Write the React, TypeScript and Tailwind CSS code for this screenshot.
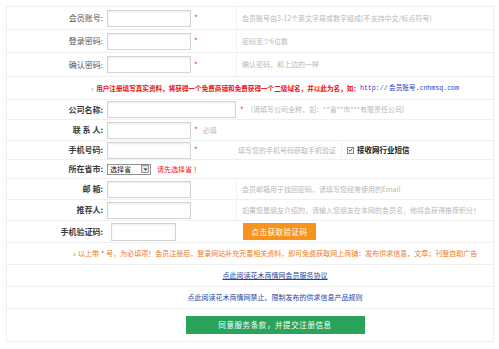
import React from "react";

const cn = "font-['Noto_Sans_CJK_SC','Noto_Sans',sans-serif]";

function Field({ w = "w-[84px]", className = "" }: { w?: string; className?: string }) {
  return (
    <input
      readOnly
      className={`${w} h-[17px] border border-[#d4d4d4] bg-white shadow-[inset_0_1px_2px_rgba(0,0,0,0.08)] outline-none ${className}`}
    />
  );
}

function Star() {
  return <span className="text-[#e4393c] text-[8px] leading-none">*</span>;
}

function Label({ text, strong = false }: { text: string; strong?: boolean }) {
  return (
    <div
      className={`w-[98px] shrink-0 pr-[2px] text-right text-[8px] leading-none ${
        strong ? "font-semibold text-[#3a3a3a]" : "text-[#555]"
      }`}
    >
      {text}
    </div>
  );
}

function Hint({ children, className = "" }: { children: React.ReactNode; className?: string }) {
  return <div className={`text-[7px] leading-none text-[#b8b8b8] whitespace-nowrap ${className}`}>{children}</div>;
}

export default function App() {
  return (
    <div className={`min-h-screen bg-white pt-[6px] px-[6px] ${cn}`}>
      <div className="w-[488px] border border-[#eeeeee]">
        {/* 会员账号 */}
        <div className="h-[23px] flex items-center border-b border-[#efefef]">
          <Label text="会员账号:" />
          <div className="w-[131px] h-full flex items-center pl-[2px] gap-[3px]">
            <Field />
            <Star />
          </div>
          <div className="h-full flex items-center pl-[5px] border-l border-[#f2f2f2]">
            <Hint>会员账号由3-12个英文字母或数字组成(不支持中文/标点符号)</Hint>
          </div>
        </div>

        {/* 登录密码 */}
        <div className="h-[23px] flex items-center border-b border-[#efefef]">
          <Label text="登录密码:" />
          <div className="w-[131px] h-full flex items-center pl-[2px] gap-[3px]">
            <Field />
            <Star />
          </div>
          <div className="h-full flex items-center pl-[5px] border-l border-[#f2f2f2]">
            <Hint>密码至少6位数</Hint>
          </div>
        </div>

        {/* 确认密码 */}
        <div className="h-[24px] flex items-center border-b border-[#efefef]">
          <Label text="确认密码:" />
          <div className="w-[131px] h-full flex items-center pl-[2px] gap-[3px]">
            <Field />
            <Star />
          </div>
          <div className="h-full flex items-center pl-[5px] border-l border-[#f2f2f2]">
            <Hint>确认密码，和上边的一样</Hint>
          </div>
        </div>

        {/* notice */}
        <div className="h-[23px] flex items-center pl-[84px] border-b border-[#efefef] text-[6.6px] leading-none whitespace-nowrap">
          <span className="text-[#f08a24] mr-[2px]">»</span>
          <span className="text-[#ee1111] font-semibold">
            用户注册填写真实资料，将获得一个免费商铺和免费获得一个二级域名，并以此为名，如：
          </span>
          <span className="text-[#2d3bc4]">
            <span className="font-['Liberation_Mono',monospace]">http://</span> 会员账号
            <span className="font-['Liberation_Mono',monospace]">.cnhmsq.com</span>
          </span>
        </div>

        {/* 公司名称 */}
        <div className="h-[20px] flex items-center border-b border-[#efefef]">
          <Label text="公司名称:" strong />
          <div className="h-full flex items-center pl-[2px] gap-[4px]">
            <Field w="w-[129px]" />
            <Star />
          </div>
          <Hint className="ml-[7px]">(请填写公司全称，如：**省**市***有限责任公司)</Hint>
        </div>

        {/* 联系人 */}
        <div className="h-[21px] flex items-center border-b border-[#efefef]">
          <Label text="联 系 人:" strong />
          <div className="h-full flex items-center pl-[2px] gap-[3px]">
            <Field />
            <Star />
            <Hint className="ml-[2px]">必填</Hint>
          </div>
        </div>

        {/* 手机号码 */}
        <div className="h-[19px] flex items-center border-b border-[#efefef]">
          <Label text="手机号码:" strong />
          <div className="w-[131px] h-full flex items-center pl-[2px] gap-[3px]">
            <Field />
            <Star />
          </div>
          <div className="w-[105px] h-full flex items-center pl-[2px]">
            <Hint>填写您的手机号码获取手机验证</Hint>
          </div>
          <div className="h-full flex items-center pl-[5px] border-l border-[#f2f2f2] gap-[3px]">
            <span className="w-[7px] h-[7px] border border-[#8a8a8a] bg-[#f4f4f4] flex items-center justify-center">
              <svg viewBox="0 0 10 10" className="w-[6px] h-[6px]">
                <path d="M1.5 5.2 L4 7.6 L8.6 2.2" fill="none" stroke="#222" strokeWidth="1.6" />
              </svg>
            </span>
            <span className="text-[7.5px] leading-none font-semibold text-[#222]">接收网行业短信</span>
          </div>
        </div>

        {/* 所在省市 */}
        <div className="h-[19px] flex items-center border-b border-[#efefef]">
          <Label text="所在省市:" strong />
          <div className="h-full flex items-center pl-[2px] gap-[6px]">
            <div className="w-[44px] h-[11px] border border-[#8f8f8f] bg-white flex items-center justify-between pl-[2px] pr-[1px]">
              <span className="text-[7px] leading-none text-[#111]">选择省</span>
              <span className="w-[8px] h-[8px] border border-[#9a9a9a] bg-[#e6e6e6] flex items-center justify-center">
                <svg viewBox="0 0 8 8" className="w-[5px] h-[5px]">
                  <path d="M1 2.5 L7 2.5 L4 6 Z" fill="#333" />
                </svg>
              </span>
            </div>
            <span className="text-[7px] leading-none text-[#ee1111]">请先选择省 ！</span>
          </div>
        </div>

        {/* 邮箱 */}
        <div className="h-[21px] flex items-center border-b border-[#efefef]">
          <Label text="邮 箱:" strong />
          <div className="w-[131px] h-full flex items-center pl-[2px]">
            <Field />
          </div>
          <div className="h-full flex items-center pl-[5px] border-l border-[#f2f2f2]">
            <Hint>会员邮箱用于找回密码，请填写您经常使用的Email</Hint>
          </div>
        </div>

        {/* 推荐人 */}
        <div className="h-[21px] flex items-center border-b border-[#efefef]">
          <Label text="推荐人:" strong />
          <div className="w-[131px] h-full flex items-center pl-[2px]">
            <Field />
          </div>
          <div className="h-full flex items-center pl-[5px] border-l border-[#f2f2f2]">
            <Hint>如果您是朋友介绍的，请输入您朋友在本网的会员名，他将会获得推荐积分！</Hint>
          </div>
        </div>

        {/* 手机验证码 */}
        <div className="h-[22px] flex items-center border-b border-[#efefef]">
          <Label text="手机验证码:" strong />
          <div className="w-[131px] h-full flex items-center pl-[6px]">
            <Field w="w-[65px]" className="h-[18px]" />
          </div>
          <div className="h-full flex items-center pl-[7px]">
            <div className="w-[73px] h-[17px] bg-[#f7941e] flex items-center justify-center text-[7.5px] leading-none text-white tracking-[0.5px]">
              点击获取验证码
            </div>
          </div>
        </div>

        {/* notice 2 */}
        <div className="h-[22px] flex items-center justify-center pl-[50px] border-b border-[#efefef] text-[7px] leading-none whitespace-nowrap text-[#f07a22]">
          <span className="mr-[2px]">»</span>
          以上带 <span className="text-[#e4393c] mx-[2px]">*</span> 号，为必填项！会员注册后，登录网站补充完善相关资料，即可免费获取网上商铺：发布供求信息，文章；刊登自助广告
        </div>

        {/* links */}
        <div className="h-[22px] flex items-center justify-center pl-[50px] border-b border-[#efefef]">
          <span className="text-[7px] leading-none text-[#23449a] underline">点此阅读花木商情网会员服务协议</span>
        </div>
        <div className="h-[22px] flex items-center justify-center pl-[50px] border-b border-[#efefef]">
          <span className="text-[7px] leading-none text-[#23449a]">点此阅读花木商情网禁止、限制发布的供求信息产品规则</span>
        </div>

        {/* submit */}
        <div className="h-[32px] flex items-center justify-center pl-[50px]">
          <div className="w-[179px] h-[18px] bg-[#2ba35b] flex items-center justify-center text-[7.5px] leading-none text-white tracking-[0.6px]">
            同意服务条款，并提交注册信息
          </div>
        </div>
      </div>
    </div>
  );
}
